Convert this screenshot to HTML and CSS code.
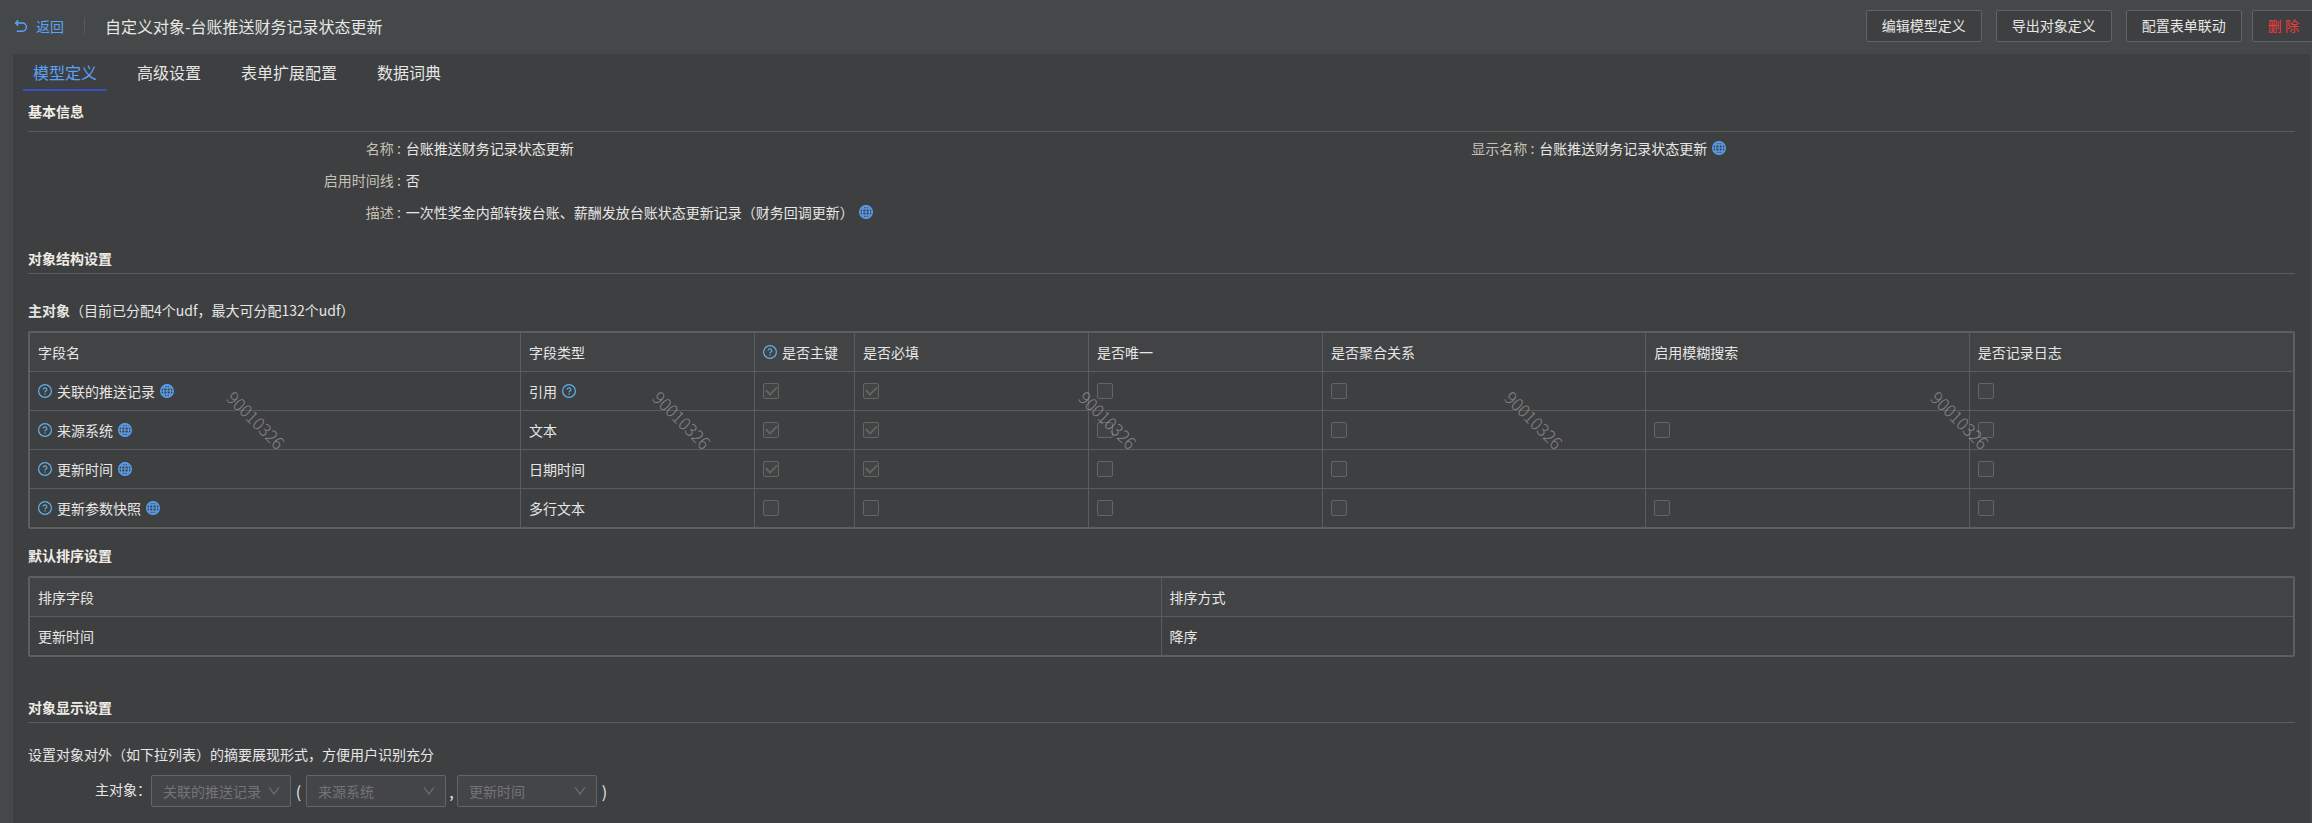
FILE: index.html
```html
<!DOCTYPE html>
<html lang="zh-CN">
<head>
<meta charset="utf-8">
<title>自定义对象-台账推送财务记录状态更新</title>
<link rel="stylesheet" href="styles.css">
</head>
<body>
<svg class="sprite" aria-hidden="true">
  <symbol id="globe" viewBox="0 0 14 14">
    <g fill="none" stroke="currentColor">
      <circle cx="7" cy="7" r="6.300" stroke-width="1.400"/>
      <ellipse cx="7" cy="7" rx="3.500" ry="6.300" stroke-width="1.200"/>
      <path d="M7 .7v12.600M.7 7h12.600M1.600 3.800h10.800M1.600 10.200h10.800" stroke-width="1.200"/>
    </g>
  </symbol>
  <symbol id="help" viewBox="0 0 14 14">
    <g fill="none" stroke="currentColor">
      <circle cx="7" cy="7" r="6.400" stroke-width="1.200"/>
      <path d="M5.100 5.600a1.900 1.700 0 1 1 2.700 1.500c-.6.3-.8.6-.8 1.300" stroke-width="1.100"/>
    </g>
    <rect x="6.400" y="9.400" width="1.200" height="1.200" fill="currentColor"/>
  </symbol>
  <symbol id="down" viewBox="0 0 12 12">
    <path d="M1.200 2.500 6 9l4.800-6.500" fill="none" stroke="currentColor" stroke-width="1.100"/>
  </symbol>
  <symbol id="back" viewBox="0 0 14 14">
    <path d="M4.200 1.300 1.600 4l2.600 2.700M1.600 4h6.700a4.100 4.100 0 0 1 0 8.200H2.800" fill="none" stroke="currentColor" stroke-width="1.500"/>
  </symbol>
</svg>

<header class="topbar">
  <a class="back" href="#"><svg class="icon"><use href="#back"/></svg>返回</a>
  <span class="divider"></span>
  <h1 class="page-title">自定义对象-台账推送财务记录状态更新</h1>
  <div class="actions">
    <button class="btn" type="button">编辑模型定义</button>
    <button class="btn" type="button">导出对象定义</button>
    <button class="btn" type="button">配置表单联动</button>
    <button class="btn btn-danger" type="button">删 除</button>
  </div>
</header>

<main class="panel">
  <nav class="tabs">
    <a class="tab active" href="#">模型定义</a>
    <a class="tab" href="#">高级设置</a>
    <a class="tab" href="#">表单扩展配置</a>
    <a class="tab" href="#">数据词典</a>
  </nav>

  <div class="content">
    <section>
      <h2 class="section-title roomy">基本信息</h2>
      <dl class="info">
        <div class="field"><dt>名称 :</dt><dd>台账推送财务记录状态更新</dd></div>
        <div class="field"><dt>显示名称 :</dt><dd>台账推送财务记录状态更新<svg class="icon globe"><use href="#globe"/></svg></dd></div>
        <div class="field full"><dt>启用时间线 :</dt><dd>否</dd></div>
        <div class="field full"><dt>描述 :</dt><dd>一次性奖金内部转拨台账、薪酬发放台账状态更新记录（财务回调更新）<svg class="icon globe"><use href="#globe"/></svg></dd></div>
      </dl>
    </section>

    <section class="structure">
      <h2 class="section-title">对象结构设置</h2>
      <p class="caption"><strong>主对象</strong>（目前已分配4个udf，最大可分配132个udf）</p>
      <div class="table-box">
        <table class="grid fields">
          <colgroup><col class="c-name"><col class="c-mid"><col class="c-key"><col class="c-mid"><col class="c-mid"><col><col><col></colgroup>
          <thead>
            <tr><th>字段名</th><th>字段类型</th><th><span class="cell"><svg class="icon help"><use href="#help"/></svg>是否主键</span></th><th>是否必填</th><th>是否唯一</th><th>是否聚合关系</th><th>启用模糊搜索</th><th>是否记录日志</th></tr>
          </thead>
          <tbody>
            <tr>
              <td><span class="cell"><svg class="icon help"><use href="#help"/></svg>关联的推送记录<svg class="icon globe"><use href="#globe"/></svg></span></td>
              <td><span class="cell">引用<svg class="icon help"><use href="#help"/></svg></span></td>
              <td><input type="checkbox" aria-label="是否主键" checked disabled></td>
              <td><input type="checkbox" aria-label="是否必填" checked disabled></td>
              <td><input type="checkbox" aria-label="是否唯一" disabled></td>
              <td><input type="checkbox" aria-label="是否聚合关系" disabled></td>
              <td></td>
              <td><input type="checkbox" aria-label="是否记录日志" disabled></td>
            </tr>
            <tr>
              <td><span class="cell"><svg class="icon help"><use href="#help"/></svg>来源系统<svg class="icon globe"><use href="#globe"/></svg></span></td>
              <td>文本</td>
              <td><input type="checkbox" aria-label="是否主键" checked disabled></td>
              <td><input type="checkbox" aria-label="是否必填" checked disabled></td>
              <td><input type="checkbox" aria-label="是否唯一" disabled></td>
              <td><input type="checkbox" aria-label="是否聚合关系" disabled></td>
              <td><input type="checkbox" aria-label="启用模糊搜索" disabled></td>
              <td><input type="checkbox" aria-label="是否记录日志" disabled></td>
            </tr>
            <tr>
              <td><span class="cell"><svg class="icon help"><use href="#help"/></svg>更新时间<svg class="icon globe"><use href="#globe"/></svg></span></td>
              <td>日期时间</td>
              <td><input type="checkbox" aria-label="是否主键" checked disabled></td>
              <td><input type="checkbox" aria-label="是否必填" checked disabled></td>
              <td><input type="checkbox" aria-label="是否唯一" disabled></td>
              <td><input type="checkbox" aria-label="是否聚合关系" disabled></td>
              <td></td>
              <td><input type="checkbox" aria-label="是否记录日志" disabled></td>
            </tr>
            <tr>
              <td><span class="cell"><svg class="icon help"><use href="#help"/></svg>更新参数快照<svg class="icon globe"><use href="#globe"/></svg></span></td>
              <td>多行文本</td>
              <td><input type="checkbox" aria-label="是否主键" disabled></td>
              <td><input type="checkbox" aria-label="是否必填" disabled></td>
              <td><input type="checkbox" aria-label="是否唯一" disabled></td>
              <td><input type="checkbox" aria-label="是否聚合关系" disabled></td>
              <td><input type="checkbox" aria-label="启用模糊搜索" disabled></td>
              <td><input type="checkbox" aria-label="是否记录日志" disabled></td>
            </tr>
          </tbody>
        </table>
      </div>
    </section>

    <section class="sorting">
      <h3 class="sub-title">默认排序设置</h3>
      <div class="table-box">
        <table class="grid">
          <thead><tr><th>排序字段</th><th>排序方式</th></tr></thead>
          <tbody><tr><td>更新时间</td><td>降序</td></tr></tbody>
        </table>
      </div>
    </section>

    <section class="display">
      <h2 class="section-title">对象显示设置</h2>
      <p class="hint">设置对象对外（如下拉列表）的摘要展现形式，方便用户识别充分</p>
      <div class="summary">
        <label class="summary-label" for="main-field">主对象：</label>
        <span class="select"><select id="main-field" disabled><option>关联的推送记录</option></select><svg class="arrow"><use href="#down"/></svg></span>
        <span class="mark">(</span>
        <span class="select"><select aria-label="主对象 2" disabled><option>来源系统</option></select><svg class="arrow"><use href="#down"/></svg></span>
        <span class="mark comma">,</span>
        <span class="select"><select aria-label="主对象 3" disabled><option>更新时间</option></select><svg class="arrow"><use href="#down"/></svg></span>
        <span class="mark">)</span>
      </div>
    </section>
  </div>
</main>

<div class="watermark" aria-hidden="true"><span>90010326</span><span>90010326</span><span>90010326</span><span>90010326</span><span>90010326</span></div>
</body>
</html>
```
FILE: styles.css
```css
* { box-sizing: border-box; }

body {
  margin: 0;
  min-height: 100vh;
  display: flex;
  flex-direction: column;
  overflow: hidden;
  background: #444849;
  color: #e6e6e4;
  font: 14px/20px "Noto Sans CJK SC", sans-serif;
}

h1, h2, h3, p, dl, dd { margin: 0; }
a { color: inherit; text-decoration: none; }
.sprite { display: none; }
.icon { width: 14px; height: 14px; flex: none; }
.globe { color: #5a9ff0; }
.help { color: #5fb2ee; }

.topbar {
  display: flex;
  align-items: center;
  height: 54px;
  padding: 0 0 2px 14px;
}
.back { display: flex; align-items: center; gap: 8px; color: #5aa2f8; }
.divider { width: 1px; height: 16px; margin: 0 20px; background: #565a5b; }
.page-title { font-size: 16px; font-weight: 400; }
.actions { display: flex; margin: 0 -3px 0 auto; }
.btn {
  height: 32px;
  margin-left: 14px;
  padding: 0 15px 2px;
  border: 1px solid #5f6566;
  border-radius: 2px;
  background: #3e3f41;
  color: #e6e6e4;
  font: inherit;
  white-space: nowrap;
}
.btn-danger { margin-left: 10px; color: #f23c3c; }

.panel {
  flex: 1;
  margin: 0 2px 0 13px;
  background: #3e3f41;
}
.tabs { display: flex; gap: 20px; height: 37px; padding-left: 10px; font-size: 16px; }
.tab { display: flex; align-items: center; padding: 0 10px; border-bottom: 2px solid transparent; }
.tab.active { color: #5aa2f8; border-color: #3a4dc4; }
.content { padding: 10px 15px; }

.section-title {
  padding-bottom: 5px;
  border-bottom: 1px solid #5a5d5e;
  color: #efece6;
  font-size: 14px;
  font-weight: 700;
}
.roomy { padding-bottom: 10px; }
.sub-title { color: #efece6; font-size: 14px; font-weight: 700; }

.info { display: grid; grid-template-columns: 1fr 1fr; }
.field { display: flex; align-items: center; height: 32px; }
.full { grid-column: 1 / -1; }
.field dt { width: 33.333%; padding-right: 5px; text-align: right; color: #c6c2b6; }
.full dt { width: 16.667%; }
.field dd { display: flex; align-items: center; gap: 5px; }

.structure { margin-top: 20px; }
.caption { margin: 26px 0 11px; }
.table-box { border: 2px solid #586060; border-radius: 2px; }
.grid { width: 100%; table-layout: fixed; border-collapse: separate; border-spacing: 0; }
.c-name { width: 21.7%; }
.c-mid { width: 10.34%; }
.c-key { width: 100px; }
.grid th, .grid td {
  height: 39px;
  padding: 0 8px;
  border-right: 1px solid #5a5d5e;
  border-bottom: 1px solid #5a5d5e;
  text-align: left;
  font-weight: 400;
}
.grid th { background: #424345; white-space: nowrap; }
.grid th:last-child, .grid td:last-child { border-right: 0; }
.grid tbody tr:last-child td { height: 38px; border-bottom: 0; }
.cell { display: flex; align-items: center; gap: 5px; }

input[type="checkbox"] {
  appearance: none;
  display: grid;
  place-items: center;
  width: 16px;
  height: 16px;
  margin: 0;
  border: 1px solid #626667;
  border-radius: 2px;
  background: #424345;
}
input[type="checkbox"]:checked::after {
  content: "";
  width: 5px;
  height: 9px;
  margin-bottom: 3px;
  border: solid #62665f;
  border-width: 0 2px 2px 0;
  transform: rotate(45deg);
}

.sorting { margin-top: 16px; }
.sub-title { margin-bottom: 11px; }

.display { margin-top: 40px; }
.hint { margin: 21px 0 11px; }
.summary { display: flex; align-items: center; padding-left: 67px; }
.summary-label { width: 56px; padding-bottom: 4px; }
.select { position: relative; width: 140px; }
select {
  appearance: none;
  display: block;
  width: 100%;
  height: 32px;
  padding: 0 11px;
  border: 1px solid #626667;
  border-radius: 2px;
  background: #444547;
  color: #737476;
  font: inherit;
  opacity: 1;
}
.arrow {
  position: absolute;
  top: 10px;
  right: 11px;
  width: 12px;
  height: 12px;
  color: #737476;
  pointer-events: none;
}
.mark { width: 15px; text-align: center; font-size: 16px; }
.comma { width: 11px; }

.watermark {
  position: absolute;
  top: 410px;
  left: 217px;
  display: flex;
  overflow: visible;
  color: rgba(200, 200, 200, 0.5);
  font-size: 17px;
  font-weight: 300;
  pointer-events: none;
}
.watermark span { width: 78px; margin-right: 348px; text-align: center; transform: rotate(45deg); }
```
